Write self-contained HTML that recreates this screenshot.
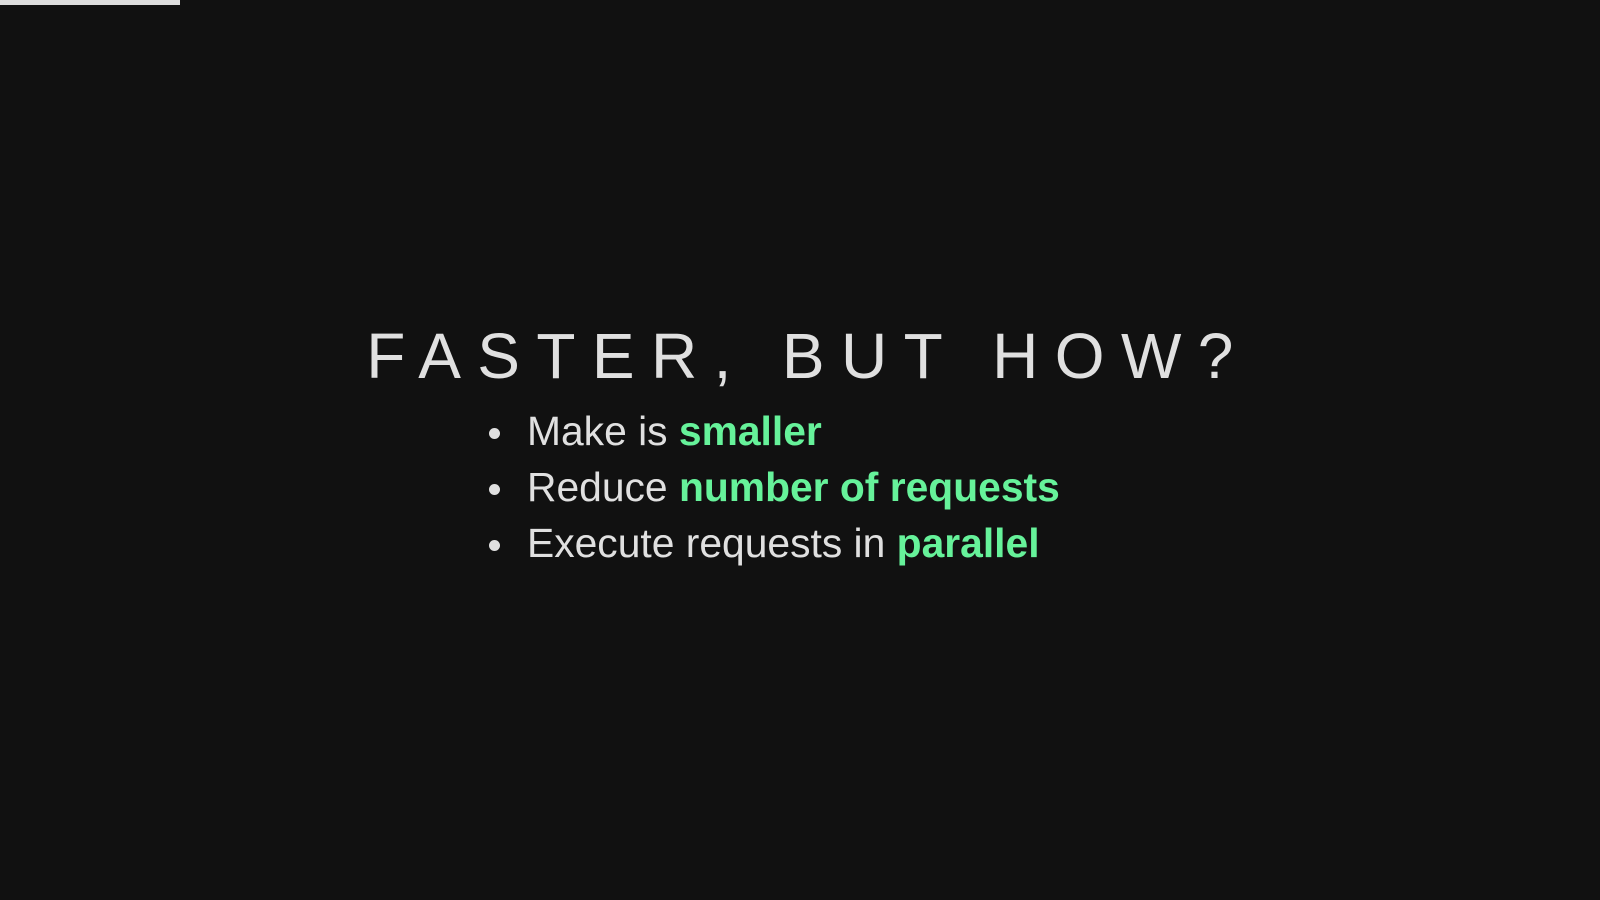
<!DOCTYPE html>
<html><head><meta charset="utf-8"><style>
html,body{margin:0;padding:0;width:1600px;height:900px;background:#111;overflow:hidden;font-family:"Liberation Sans",sans-serif;color:#e0e0e0}
.bar{position:absolute;left:0;top:0;width:180px;height:5px;background:#ddd}
h1{position:absolute;left:0;width:1616px;top:324px;margin:0;text-align:center;font-weight:normal;font-size:64px;line-height:64px;letter-spacing:16.4px}
ul{position:absolute;left:527px;top:403px;margin:0;padding:0;font-size:40.8px;line-height:56px;list-style:none}
li{position:relative}
li:before{content:"";position:absolute;left:-38px;top:25px;width:11px;height:11px;border-radius:50%;background:#e0e0e0}
b{color:#66f29a}
</style></head><body>
<div class="bar"></div>
<h1>FASTER, BUT HOW?</h1>
<ul>
<li>Make is <b>smaller</b></li>
<li>Reduce <b>number of requests</b></li>
<li>Execute requests in <b>parallel</b></li>
</ul>
</body></html>
